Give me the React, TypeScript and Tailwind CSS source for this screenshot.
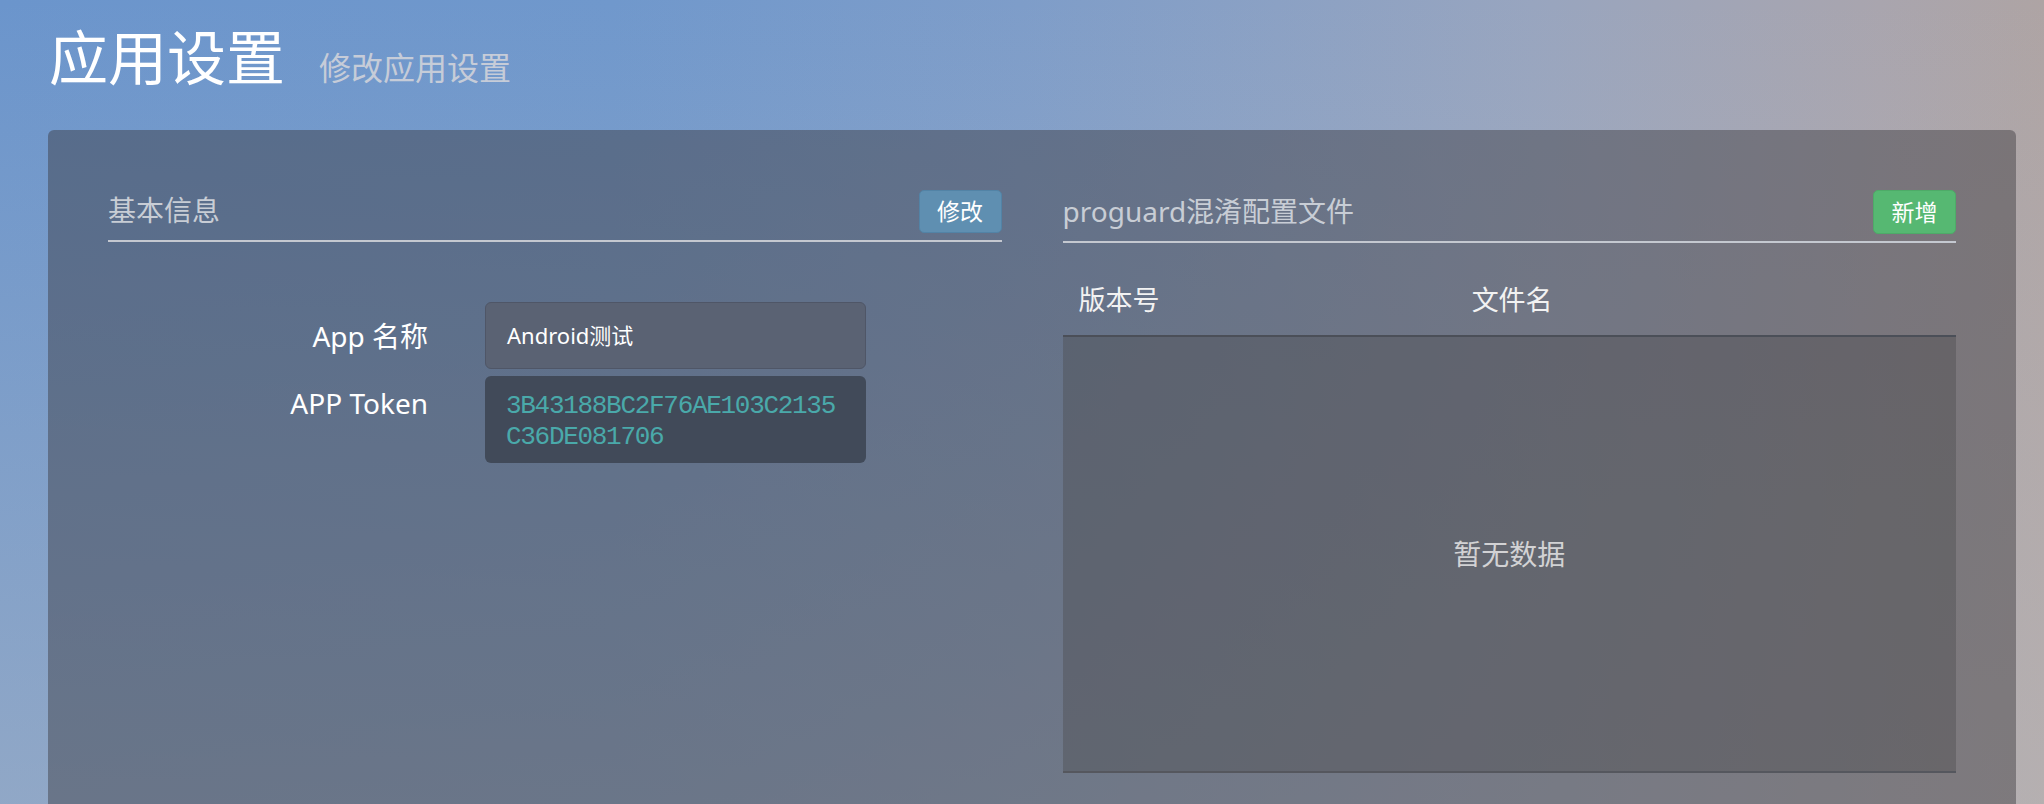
import * as React from "react"

const font = { fontFamily: '"Noto Sans", "Noto Sans CJK SC", sans-serif' }

function SectionHeader({ title, action, tone }: { title: string; action: string; tone: "blue" | "green" }) {
  return (
    <div className="flex items-center justify-between border-b-2 border-[#c4c8d0] pb-[7px]">
      <span className="-mt-[3px] text-[28px] leading-none text-[#c8cdd5]">{title}</span>
      <button
        className={
          tone === "blue"
            ? "h-[43px] w-[83px] rounded-[5px] border border-[#5283a6] bg-[#5f8fb1] text-[23px] text-white"
            : "h-[44px] w-[83px] rounded-[5px] border border-[#4eab68] bg-[#56b872] text-[23px] text-white"
        }
      >
        {action}
      </button>
    </div>
  )
}

export default function App() {
  return (
    <div
      style={font}
      className="h-screen overflow-hidden bg-[linear-gradient(to_bottom,rgba(190,190,192,0)_0%,rgba(190,190,192,0.45)_100%),linear-gradient(to_right,#6b95cc_0%,#7098cc_30%,#7e9dc9_50%,#98a5bf_75%,#a9a5ae_92%,#aea4a4_100%)] pl-[48px] pr-[28px]"
    >
      <div className="flex items-baseline pt-[28px] pl-[1px]">
        <h1 className="text-[59px] font-normal leading-none text-white">应用设置</h1>
        <span className="ml-[34px] text-[32px] leading-none text-[#c6ccd8]">修改应用设置</span>
      </div>

      <div className="mt-[43px] rounded-[6px] bg-[rgba(54,52,56,0.43)] px-[60px] pt-[60px] pb-[80px]">
        <div className="grid grid-cols-2 gap-[61px]">
          {/* basic info */}
          <div>
            <SectionHeader title="基本信息" action="修改" tone="blue" />
            <div className="mt-[60px] flex flex-col gap-[7px]">
              <div className="flex items-center">
                <div className="w-[320px] text-right text-[28px] text-white">App 名称</div>
                <div className="ml-[57px] flex h-[67px] w-[381px] items-center rounded-[6px] border border-[#4f5667] bg-[#5a6273] pl-[21px] text-[22px] text-white">
                  Android测试
                </div>
              </div>
              <div className="flex items-start">
                <div className="w-[320px] pt-[9px] text-right text-[28px] leading-[36px] text-white">APP Token</div>
                <div
                  className="ml-[57px] h-[87px] w-[381px] break-all rounded-[6px] bg-[#414a59] px-[21px] pt-[15px] text-[26px] leading-[31px] tracking-[-1.3px] text-[#4aa9aa]"
                  style={{ fontFamily: '"Liberation Mono", "Courier New", monospace' }}
                >
                  3B43188BC2F76AE103C2135C36DE081706
                </div>
              </div>
            </div>
          </div>

          {/* proguard files */}
          <div>
            <SectionHeader title="proguard混淆配置文件" action="新增" tone="green" />
            <div className="mt-[22px]">
              <div className="flex h-[72px] items-center border-b-2 border-[#4b4f58] text-[27px] text-[#f2f2f2]">
                <div className="w-[44%] pl-[16px]">版本号</div>
                <div className="pl-[16px]">文件名</div>
              </div>
              <div className="flex h-[436px] items-center justify-center border-b-2 border-[#55575e] bg-[rgba(75,75,78,0.4)] text-[28px] text-[#d2d2d4]">
                暂无数据
              </div>
            </div>
          </div>
        </div>
      </div>
    </div>
  )
}
